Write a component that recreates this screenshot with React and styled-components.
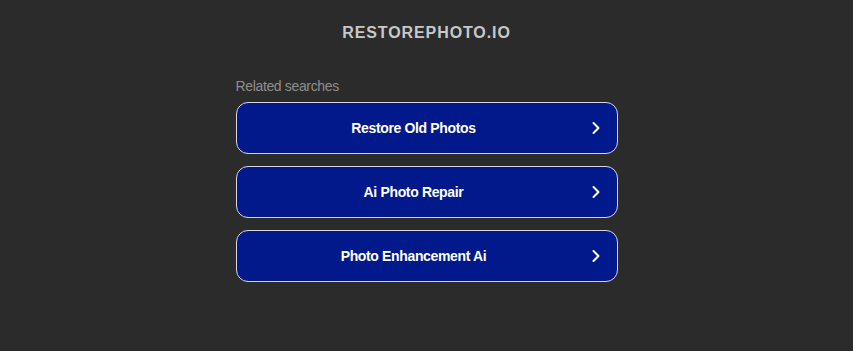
import styled, { createGlobalStyle } from "styled-components";

const GlobalStyle = createGlobalStyle`
  body {
    margin: 0;
    background: #2b2b2b;
    font-family: "Liberation Sans", Arial, sans-serif;
  }
`;

const Page = styled.div`
  display: flex;
  flex-direction: column;
  align-items: center;
  min-height: 351px;
`;

const Domain = styled.h1`
  margin: 24px 0 0;
  font-size: 16px;
  font-weight: 700;
  letter-spacing: 0.9px;
  color: #c8c8c8;
  line-height: 18px;
`;

const Section = styled.div`
  width: 382px;
  margin-top: 36px;
  display: flex;
  flex-direction: column;
`;

const Label = styled.div`
  font-size: 14px;
  letter-spacing: -0.35px;
  color: #8e8e8e;
  line-height: 16px;
  margin-bottom: 8px;
`;

const List = styled.div`
  display: flex;
  flex-direction: column;
  gap: 12px;
`;

const Link = styled.a`
  position: relative;
  display: flex;
  align-items: center;
  justify-content: center;
  height: 50px;
  padding-right: 26px;
  border: 1px solid #d8d8e0;
  border-radius: 12px;
  background: #02198b;
  color: #fff;
  font-size: 14px;
  letter-spacing: -0.35px;
  font-weight: 700;
  text-decoration: none;
`;

const Chevron = styled.svg`
  position: absolute;
  right: 15px;
  top: 50%;
  transform: translateY(-50%);
`;

const items = ["Restore Old Photos", "Ai Photo Repair", "Photo Enhancement Ai"];

export default function App() {
  return (
    <>
      <GlobalStyle />
      <Page>
        <Domain>RESTOREPHOTO.IO</Domain>
        <Section>
          <Label>Related searches</Label>
          <List>
            {items.map(t => (
              <Link href="#" key={ t }>
                { t }
                <Chevron width="12" height="14" viewBox="0 0 12 14">
                  <path d="M3.5 2 L8.5 7 L3.5 12" fill="none" stroke="#fff" strokeWidth="2" strokeLinecap="round" strokeLinejoin="round" />
                </Chevron>
              </Link>
            ))}
          </List>
        </Section>
      </Page>
    </>
  );
}
